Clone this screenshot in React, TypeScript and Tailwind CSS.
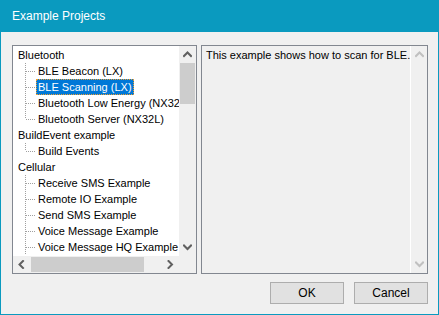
import React from "react"

const font = { fontFamily: '"Liberation Sans", Arial, sans-serif' }

type Item = { label: string; selected?: boolean; last?: boolean }
type Group = { label: string; items: Item[] }

const groups: Group[] = [
  {
    label: "Bluetooth",
    items: [
      { label: "BLE Beacon (LX)" },
      { label: "BLE Scanning (LX)", selected: true },
      { label: "Bluetooth Low Energy (NX32L)" },
      { label: "Bluetooth Server (NX32L)", last: true },
    ],
  },
  { label: "BuildEvent example", items: [{ label: "Build Events", last: true }] },
  {
    label: "Cellular",
    items: [
      { label: "Receive SMS Example" },
      { label: "Remote IO Example" },
      { label: "Send SMS Example" },
      { label: "Voice Message Example" },
      { label: "Voice Message HQ Example" },
    ],
  },
]

function Chevron({ dir, light }: { dir: "up" | "down" | "left" | "right"; light?: boolean }) {
  const points = {
    up: "1,5 4.5,1.5 8,5",
    down: "1,1.5 4.5,5 8,1.5",
    left: "5,1 1.5,4.5 5,8",
    right: "1.5,1 5,4.5 1.5,8",
  }[dir]
  const vertical = dir === "up" || dir === "down"
  return (
    <svg width={vertical ? 9 : 7} height={vertical ? 7 : 9} className="block">
      <polyline
        points={points}
        fill="none"
        stroke={light ? "#c0c0c0" : "#606060"}
        strokeWidth="2"
        strokeLinecap="square"
      />
    </svg>
  )
}

function TreeLines({ last }: { last?: boolean }) {
  return (
    <svg width={18} height={16} className="block shrink-0">
      <line x1="7.5" y1="0" x2="7.5" y2={last ? 8 : 16} stroke="#a0a0a0" strokeDasharray="1 1" />
      <line x1="8" y1="8.5" x2="18" y2="8.5" stroke="#a0a0a0" strokeDasharray="1 1" />
    </svg>
  )
}

function TreeView() {
  return (
    <div className="flex h-full w-[185px] shrink-0 flex-col border border-[#828790] bg-white">
      <div className="flex min-h-0 flex-1">
        <div className="min-w-0 flex-1 overflow-hidden pt-px">
          {groups.map(group => (
            <div key={group.label}>
              <div className="h-4 whitespace-nowrap pl-[5px] leading-4">{group.label}</div>
              {group.items.map(item => (
                <div key={item.label} className="flex h-4 whitespace-nowrap pl-[5px] leading-4">
                  <TreeLines last={item.last} />
                  <span
                    className={
                      item.selected
                        ? "border border-dotted border-[#f0a030] bg-[#0078d7] px-px leading-[14px] text-white"
                        : "px-[2px]"
                    }
                  >
                    {item.label}
                  </span>
                </div>
              ))}
            </div>
          ))}
        </div>
        <div className="flex w-[17px] shrink-0 flex-col bg-[#f0f0f0]">
          <div className="flex h-[17px] items-center justify-center">
            <Chevron dir="up" />
          </div>
          <div className="mx-px h-[41px] bg-[#cdcdcd]" />
          <div className="flex-1" />
          <div className="flex h-[17px] items-center justify-center">
            <Chevron dir="down" />
          </div>
        </div>
      </div>
      <div className="flex h-[17px] bg-[#f0f0f0]">
        <div className="flex w-[17px] items-center justify-center">
          <Chevron dir="left" />
        </div>
        <div className="my-px ml-[1px] w-[113px] bg-[#cdcdcd]" />
        <div className="flex-1" />
        <div className="flex w-[17px] items-center justify-center">
          <Chevron dir="right" />
        </div>
        <div className="w-[17px]" />
      </div>
    </div>
  )
}

function Description() {
  return (
    <div className="flex h-full min-w-0 flex-1 border border-[#828790] bg-[#f0f0f0]">
      <div className="min-w-0 flex-1 overflow-hidden whitespace-nowrap pl-1 pt-px leading-4">
        This example shows how to scan for BLE.
      </div>
      <div className="flex w-[17px] shrink-0 flex-col border-l border-white">
        <div className="flex h-[17px] items-center justify-center">
          <Chevron dir="up" light />
        </div>
        <div className="flex-1" />
        <div className="flex h-[17px] items-center justify-center">
          <Chevron dir="down" light />
        </div>
      </div>
    </div>
  )
}

function Button({ children }: { children: React.ReactNode }) {
  return (
    <button className="h-[22px] w-[74px] border border-[#adadad] bg-[#e1e1e1] text-[12px] leading-4 text-black">
      {children}
    </button>
  )
}

export default function App() {
  return (
    <div
      className="flex h-[315px] w-[439px] flex-col border-x border-b border-[#0a9abf] bg-[#f0f0f0] text-[11px] text-black"
      style={font}
    >
      <div className="-mx-px flex h-8 items-center bg-[#0a9abf] pl-3 text-[12px] text-white">
        Example Projects
      </div>
      <div className="flex flex-1 flex-col pl-[11px] pr-[10px] pt-[13px]">
        <div className="flex h-[229px] gap-1">
          <TreeView />
          <Description />
        </div>
        <div className="mt-[8px] flex justify-end gap-[10px]">
          <Button>OK</Button>
          <Button>Cancel</Button>
        </div>
      </div>
    </div>
  )
}
